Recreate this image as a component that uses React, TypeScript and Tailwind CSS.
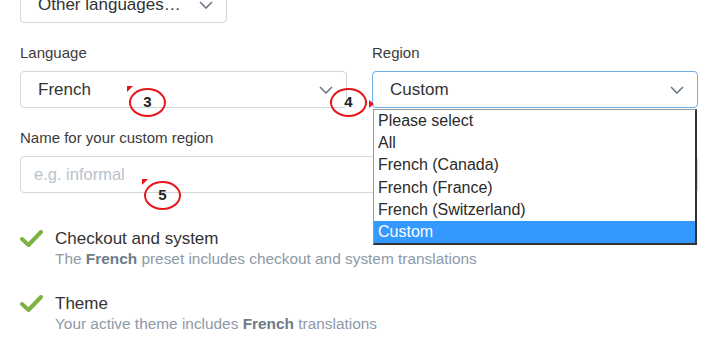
import { ReactNode } from 'react'

const Chevron = () => (
    <svg width="14" height="8" viewBox="0 0 14 8" className="shrink-0">
        <polyline points="1,1 7,7 13,1" fill="none" stroke="#6b7886" strokeWidth="1.6" />
    </svg>
)

const Check = () => (
    <svg width="23" height="17" viewBox="0 0 23 17" className="shrink-0">
        <polyline points="2,9 8.5,15 21,2" fill="none" stroke="#7cb342" strokeWidth="4" strokeLinecap="round" strokeLinejoin="round" />
    </svg>
)

function Callout({ n, className, tail }: { n: number; className: string; tail: ReactNode }) {
    return (
        <div className={`absolute ${className}`}>
            {tail}
            <div className="w-[37px] h-[29px] rounded-[50%] border-2 border-[#e8141a] flex items-center justify-center text-[15px] font-bold text-[#222]">
                {n}
            </div>
        </div>
    )
}

function Select({ value, focused }: { value: string; focused?: boolean }) {
    return (
        <div
            className={`h-[37px] rounded-[4px] border bg-white flex items-center justify-between pl-[17px] pr-[13px] text-[17px] text-[#333] ${focused ? 'border-[#6aaee8]' : 'border-[#cfd8e0]'}`}
        >
            <span>{value}</span>
            <Chevron />
        </div>
    )
}

const options = ['Please select', 'All', 'French (Canada)', 'French (France)', 'French (Switzerland)', 'Custom']

export default function App() {
    return (
        <div className="w-[720px] h-[340px] overflow-hidden bg-white relative font-['Liberation_Sans',Arial,sans-serif] text-[#3b3b3b]">
            <div className="pl-[20px] pr-[22px]">
                {/* Other languages */}
                <div className="w-[207px] -mt-[14px]">
                    <Select value="Other languages…" />
                </div>

                {/* Language / Region */}
                <div className="grid grid-cols-[327px_326px] gap-x-[25px] mt-[21px]">
                    <div>
                        <div className="text-[15px] leading-[18px] mb-[9px]">Language</div>
                        <Select value="French" />
                    </div>
                    <div className="relative">
                        <div className="text-[15px] leading-[18px] mb-[9px]">Region</div>
                        <Select value="Custom" focused />
                        {/* open dropdown */}
                        <div className="absolute left-[1px] right-[1px] top-[65px] z-20 bg-white border border-[#9a9a9a] border-r-2 border-b-2 border-r-[#333] border-b-[#333] text-[16px] leading-[22.2px] text-[#2a2a2a]">
                            {options.map((o) => (
                                <div
                                    key={o}
                                    className={`pl-[4px] ${o === 'Custom' ? 'bg-[#3399ff] text-white' : ''}`}
                                >
                                    {o}
                                </div>
                            ))}
                        </div>
                    </div>
                </div>

                {/* Name for custom region */}
                <div className="mt-[21px]">
                    <div className="text-[15px] leading-[18px] mb-[9px]">Name for your custom region</div>
                    <div className="h-[37px] rounded-[4px] border border-[#cfd8e0] flex items-center pl-[13px] text-[16.5px] text-[#b6c2cd]">
                        e.g. informal
                    </div>
                </div>

                {/* Checks */}
                <div className="mt-[36px] flex flex-col gap-[25px]">
                    <div className="flex gap-[12px]">
                        <div className="pt-[1px]"><Check /></div>
                        <div>
                            <div className="text-[17px] leading-[20px] text-[#333]">Checkout and system</div>
                            <div className="text-[15.4px] leading-[20px] text-[#8d9aa7]">
                                The <b className="text-[#6e7b88]">French</b> preset includes checkout and system translations
                            </div>
                        </div>
                    </div>
                    <div className="flex gap-[12px]">
                        <div className="pt-[1px]"><Check /></div>
                        <div>
                            <div className="text-[17px] leading-[20px] text-[#333]">Theme</div>
                            <div className="text-[15.4px] leading-[20px] text-[#8d9aa7]">
                                Your active theme includes <b className="text-[#6e7b88]">French</b> translations
                            </div>
                        </div>
                    </div>
                </div>
            </div>

            {/* annotation callouts */}
            <Callout
                n={3}
                className="left-[129px] top-[88px]"
                tail={<div className="absolute -left-[2px] -top-[2px] w-0 h-0 border-t-[6px] border-t-[#e8141a] border-r-[6px] border-r-transparent" />}
            />
            <Callout
                n={4}
                className="left-[330px] top-[88px]"
                tail={<div className="absolute left-[39px] top-[12px] w-0 h-0 border-l-[5px] border-l-[#e8141a] border-y-[4px] border-y-transparent" />}
            />
            <Callout
                n={5}
                className="left-[144px] top-[181px]"
                tail={<div className="absolute -left-[2px] -top-[2px] w-0 h-0 border-t-[6px] border-t-[#e8141a] border-r-[6px] border-r-transparent" />}
            />
        </div>
    )
}
